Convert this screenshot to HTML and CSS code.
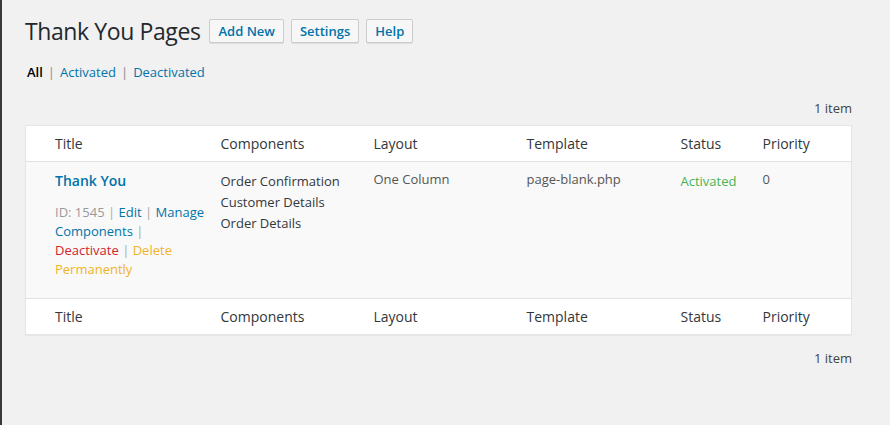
FILE: index.html
```html
<!DOCTYPE html>
<html>
<head>
<meta charset="utf-8">
<link rel="stylesheet" href="styles.css">
</head>
<body>
<div class="wrap">
  <div class="heading">
    <h1 class="title">Thank You Pages</h1>
    <a class="btn">Add New</a>
    <a class="btn">Settings</a>
    <a class="btn">Help</a>
  </div>
  <ul class="subsub">
    <li class="current">All</li>
    <li class="sep">|</li>
    <li><a>Activated</a></li>
    <li class="sep">|</li>
    <li><a>Deactivated</a></li>
  </ul>
  <div class="count top">1 item</div>
  <table class="list">
    <colgroup>
      <col class="c1"><col class="c2"><col class="c3"><col class="c4"><col class="c5"><col class="c6">
    </colgroup>
    <thead>
      <tr><th class="first">Title</th><th>Components</th><th>Layout</th><th>Template</th><th>Status</th><th>Priority</th></tr>
    </thead>
    <tbody>
      <tr>
        <td class="first">
          <a class="row-title">Thank You</a>
          <div class="actions"><span class="muted">ID: 1545</span> <span class="pipe">|</span> <a>Edit</a> <span class="pipe">|</span> <a>Manage</a><br><a>Components</a> <span class="pipe">|</span><br><a class="red">Deactivate</a> <span class="pipe">|</span> <a class="orange">Delete</a><br><a class="orange">Permanently</a></div>
        </td>
        <td class="comps">Order Confirmation<br>Customer Details<br>Order Details</td>
        <td class="plain">One Column</td>
        <td class="plain">page-blank.php</td>
        <td class="status">Activated</td>
        <td class="plain">0</td>
      </tr>
    </tbody>
    <tfoot>
      <tr><th class="first">Title</th><th>Components</th><th>Layout</th><th>Template</th><th>Status</th><th>Priority</th></tr>
    </tfoot>
  </table>
  <div class="count bottom">1 item</div>
</div>
</body>
</html>
```

FILE: styles.css
```css
html, body {
  margin: 0;
  padding: 0;
  height: 100%;
}
body {
  background: #f1f1f1;
  font-family: "Open Sans", "Noto Sans", sans-serif;
  color: #444;
  font-size: 13px;
  border-left: 2px solid #3a3a3a;
  box-sizing: border-box;
}
a {
  color: #0073aa;
  text-decoration: none;
}
.wrap {
  padding: 0 38px 0 23px;
}
.heading {
  display: flex;
  align-items: center;
  padding-top: 19px;
}
.title {
  margin: 0 9px 0 0;
  font-size: 23px;
  letter-spacing: -0.4px;
  font-weight: 400;
  color: #23282d;
  line-height: 24px;
}
.btn {
  display: inline-block;
  border: 1px solid #ccc;
  background: #f7f7f7;
  border-radius: 2px;
  box-shadow: 0 1px 0 #ddd;
  font-weight: 600;
  font-size: 13px;
  line-height: 22px;
  padding: 0 8px;
  margin-right: 7px;
  color: #0073aa;
}
.subsub {
  list-style: none;
  margin: 19px 0 0 2px;
  padding: 0;
  display: flex;
  gap: 5px;
  line-height: 20px;
}
.subsub .current {
  font-weight: 600;
  color: #000;
}
.subsub .sep {
  color: #888;
}
.count {
  text-align: right;
  color: #444;
  line-height: 20px;
}
.count.top {
  margin-top: 16px;
}
.count.bottom {
  margin-top: 13px;
}
.list {
  margin-top: 7px;
  width: 100%;
  border-collapse: collapse;
  table-layout: fixed;
  background: #fff;
  border: 1px solid #e5e5e5;
  box-shadow: 0 1px 1px rgba(0,0,0,0.04);
}
.c1 { width: 185px; }
.c2 { width: 153px; }
.c3 { width: 153px; }
.c4 { width: 154px; }
.c5 { width: 82px; }
.list th {
  text-align: left;
  font-weight: 400;
  font-size: 14px;
  color: #32373c;
  padding: 0 10px;
  height: 35px;
}
.list thead th {
  border-bottom: 1px solid #e1e1e1;
}
.list tfoot th {
  border-top: 1px solid #e1e1e1;
}
.list .first {
  padding-left: 29px;
}
.list tbody tr {
  background: #f9f9f9;
}
.list td {
  vertical-align: top;
  padding: 9px 10px 0;
  height: 125px;
  color: #555;
  font-size: 13px;
  line-height: 16px;
}
.row-title {
  display: block;
  font-size: 14px;
  font-weight: 600;
  line-height: 19px;
}
.actions {
  margin-top: 13px;
  line-height: 19px;
  font-size: 13px;
  white-space: nowrap;
}
.muted {
  color: #999;
}
.pipe {
  color: #aaa;
}
.red {
  color: #d2232d;
}
.orange {
  color: #f0b429;
}
.list td.comps {
  line-height: 21px;
  padding-top: 9px;
  color: #32373c;
}
.list td.plain {
  padding-top: 9px;
}
.list td.status {
  color: #46b450;
  padding-top: 11px;
}
```
